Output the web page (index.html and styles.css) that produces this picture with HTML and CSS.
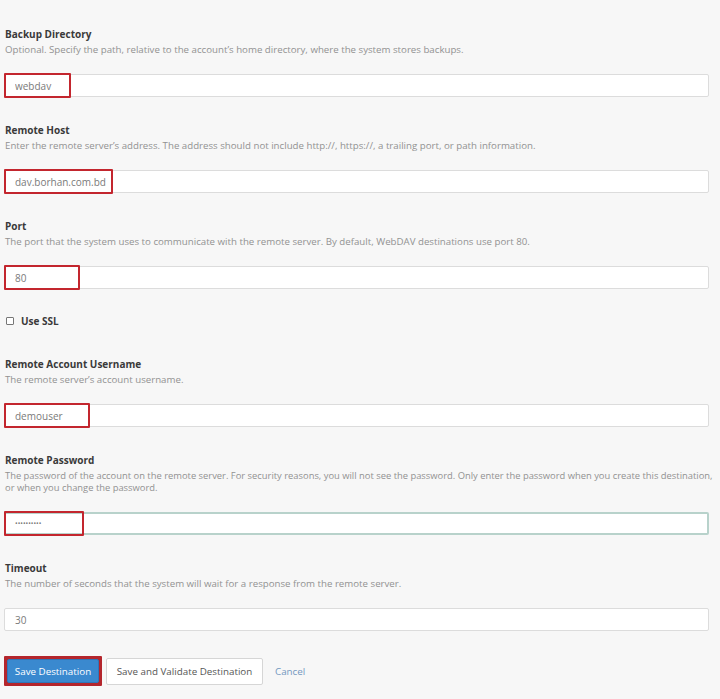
FILE: index.html
```html
<!DOCTYPE html>
<html>
<head>
<meta charset="utf-8">
<link rel="stylesheet" href="styles.css">
</head>
<body>
<form class="form">
  <div class="field">
    <div class="label">Backup Directory</div>
    <div class="desc">Optional. Specify the path, relative to the account’s home directory, where the system stores backups.</div>
    <div class="control">
      <input class="input" type="text" value="webdav">
      <span class="mark mark-dir"></span>
    </div>
  </div>
  <div class="field">
    <div class="label">Remote Host</div>
    <div class="desc">Enter the remote server’s address. The address should not include http://, https://, a trailing port, or path information.</div>
    <div class="control">
      <input class="input" type="text" value="dav.borhan.com.bd">
      <span class="mark mark-host"></span>
    </div>
  </div>
  <div class="field">
    <div class="label">Port</div>
    <div class="desc">The port that the system uses to communicate with the remote server. By default, WebDAV destinations use port 80.</div>
    <div class="control">
      <input class="input" type="text" value="80">
      <span class="mark mark-port"></span>
    </div>
  </div>
  <label class="check"><span class="box"></span><span>Use SSL</span></label>
  <div class="field">
    <div class="label">Remote Account Username</div>
    <div class="desc">The remote server’s account username.</div>
    <div class="control">
      <input class="input" type="text" value="demouser">
      <span class="mark mark-user"></span>
    </div>
  </div>
  <div class="field">
    <div class="label">Remote Password</div>
    <div class="desc desc-tight">The password of the account on the remote server. For security reasons, you will not see the password. Only enter the password when you create this destination, or when you change the password.</div>
    <div class="control">
      <input class="input input-focus" type="password" value="demopassw1">
      <span class="mark mark-pass"></span>
    </div>
  </div>
  <div class="field">
    <div class="label">Timeout</div>
    <div class="desc">The number of seconds that the system will wait for a response from the remote server.</div>
    <div class="control">
      <input class="input" type="text" value="30">
    </div>
  </div>
  <div class="actions">
    <span class="btn-wrap">
      <button type="button" class="btn btn-primary">Save Destination</button>
    </span>
    <button type="button" class="btn btn-default">Save and Validate Destination</button>
    <a class="cancel" href="#">Cancel</a>
  </div>
</form>
</body>
</html>
```

FILE: styles.css
```css
html, body {
  margin: 0;
  padding: 0;
  background: #f7f7f7;
}
body {
  font-family: "Open Sans", "Liberation Sans", sans-serif;
  color: #333;
  width: 720px;
  height: 699px;
  overflow: hidden;
}
.form {
  padding: 28px 11px 0 4px;
}
.field {
  margin-bottom: 27px;
}
.label {
  font-size: 10px;
  font-weight: 700;
  line-height: 12px;
  color: #3a3a3a;
  padding-left: 1px;
}
.desc {
  margin-top: 4px;
  margin-right: -10px;
  font-size: 9.7px;
  line-height: 12px;
  color: #929292;
  padding-left: 1px;
}
.desc-tight {
  font-size: 9.4px;
}
.control {
  position: relative;
  margin-top: 18px;
}
.input {
  display: block;
  box-sizing: border-box;
  width: 705px;
  height: 23px;
  margin: 0;
  padding: 0 10px;
  border: 1px solid #dcdcdc;
  border-radius: 2px;
  background: #fff;
  font-family: "Open Sans", "Liberation Sans", sans-serif;
  font-size: 10px;
  color: #7a7a7a;
  outline: none;
}
.input-focus {
  border: 2px solid #b8d2cb;
  padding-left: 9px;
  font-size: 7px;
}
.mark {
  position: absolute;
  top: -1px;
  left: 0;
  height: 25px;
  box-sizing: border-box;
  border: 2px solid #c3262e;
  border-radius: 1px;
  pointer-events: none;
}
.mark-dir { width: 67px; }
.mark-host { width: 109px; }
.mark-port { width: 76px; }
.mark-user { width: 86px; }
.mark-pass { width: 80px; }
.check {
  display: flex;
  align-items: center;
  gap: 7px;
  height: 12px;
  margin: -1px 0 31px 2px;
  font-size: 10px;
  font-weight: 700;
  color: #3a3a3a;
}
.box {
  width: 6px;
  height: 6px;
  border: 1px solid #777;
  border-radius: 1px;
  background: #fff;
}
.actions {
  display: flex;
  align-items: center;
  margin-top: -2px;
}
.btn-wrap {
  display: inline-flex;
  padding: 1px;
  border: 2px solid #b4262d;
  border-radius: 1px;
  background: #b4262d;
}
.btn {
  font-family: "Open Sans", "Liberation Sans", sans-serif;
  font-size: 9.8px;
  height: 26px;
  padding: 0 8px;
  border-radius: 2px;
  margin: 0;
  cursor: pointer;
}
.btn-primary {
  height: 24px;
  width: 92px;
  padding: 0;
  border: 1px solid #2f76b8;
  background: #3a89cf;
  color: #fff;
}
.btn-default {
  margin-left: 4px;
  width: 157px;
  padding: 0;
  height: 27px;
  border: 1px solid #d6d6d6;
  background: #fff;
  color: #555;
}
.cancel {
  margin-left: 12px;
  font-size: 9.8px;
  color: #7498bf;
  text-decoration: none;
}
```
